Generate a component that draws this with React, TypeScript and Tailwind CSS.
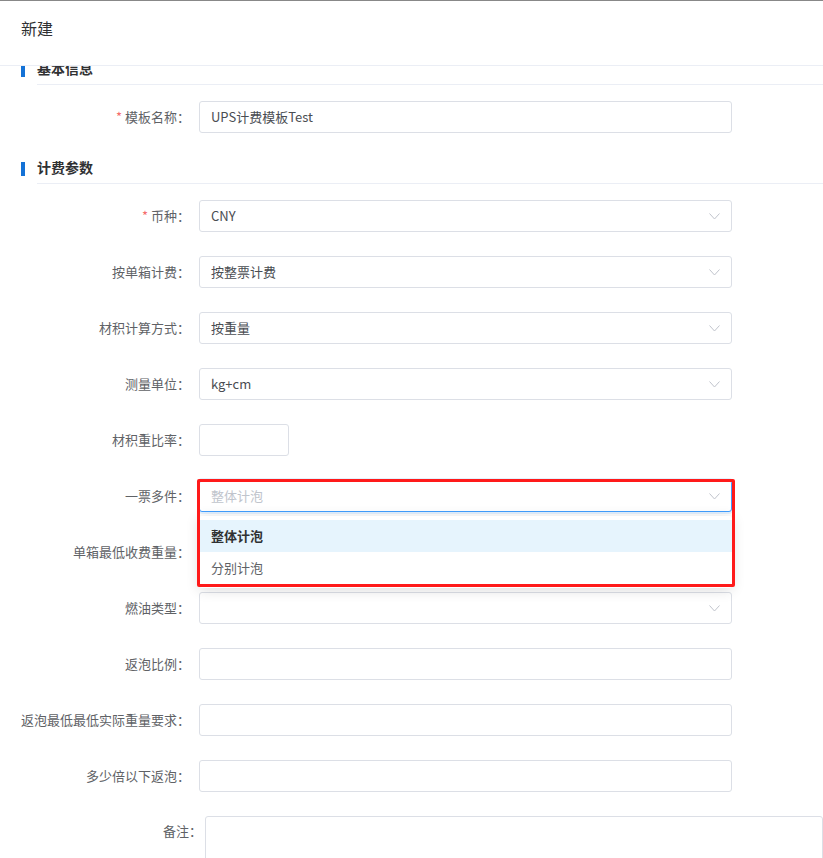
import React from 'react';

const font = { fontFamily: '"Noto Sans CJK SC", "Noto Sans", sans-serif' };

const Chevron: React.FC = () => (
  <svg width="11" height="7" viewBox="0 0 11 7" fill="none" className="shrink-0">
    <path d="M0.5 0.5L5.5 6L10.5 0.5" stroke="#c0c4cc" strokeWidth="1" />
  </svg>
);

const SectionTitle: React.FC<{ title: string }> = ({ title }) => (
  <div className="flex pl-[21px]">
    <div className="w-[4px] h-[14px] mt-[5px] bg-[#1472d6]" />
    <div className="ml-[12px] flex-1 border-b border-[#ebeef5] pt-[3px] pb-[9px] text-[14px] leading-[14px] font-bold text-[#303133]">
      {title}
    </div>
  </div>
);

type FieldProps = {
  label: string;
  required?: boolean;
  children: React.ReactNode;
};

const Field: React.FC<FieldProps> = ({ label, required, children }) => (
  <div className="flex items-center h-[32px] mb-[24px]">
    <div className="w-[190px] shrink-0 text-right text-[13px] text-[#606266] whitespace-nowrap">
      {required && <span className="text-[#f56c6c] mr-[3px]">*</span>}
      {label}：
    </div>
    <div className="ml-[9px]">{children}</div>
  </div>
);

const Input: React.FC<{ value?: string; width?: string }> = ({ value, width = 'w-[533px]' }) => (
  <div className={`${width} h-[32px] border border-[#dcdfe6] rounded-[3px] bg-white flex items-center px-[11px] text-[13px] text-[#4a4d52]`}>
    {value}
  </div>
);

const Select: React.FC<{ value?: string }> = ({ value }) => (
  <div className="w-[533px] h-[32px] border border-[#dcdfe6] rounded-[3px] bg-white flex items-center justify-between pl-[11px] pr-[11px] text-[13px] text-[#4a4d52]">
    <span>{value}</span>
    <Chevron />
  </div>
);

export default function App() {
  return (
    <div className="w-[823px] h-[858px] bg-white overflow-hidden" style={font}>
      <div className="relative z-10 h-[66px] border-t border-[#888888] border-b border-b-[#ebeef5] bg-white px-[21px] pt-[17px] text-[16px] leading-[20px] text-[#303133]">
        新建
      </div>
      <div className="h-[792px] overflow-hidden">
        <div className="-mt-[8px]">
          <SectionTitle title="基本信息" />
          <div className="pt-[16px]">
            <Field label="模板名称" required>
              <Input value="UPS计费模板Test" />
            </Field>
          </div>
          <SectionTitle title="计费参数" />
          <div className="pt-[16px]">
            <Field label="币种" required>
              <Select value="CNY" />
            </Field>
            <Field label="按单箱计费">
              <Select value="按整票计费" />
            </Field>
            <Field label="材积计算方式">
              <Select value="按重量" />
            </Field>
            <Field label="测量单位">
              <Select value="kg+cm" />
            </Field>
            <Field label="材积重比率">
              <Input width="w-[90px]" />
            </Field>
            <Field label="一票多件">
              <div className="relative">
                <div className="w-[533px] h-[32px] border border-[#409eff] rounded-[3px] bg-white flex items-center justify-between px-[11px] text-[13px] text-[#c0c4cc] shadow-[0_0_0_2px_rgba(64,158,255,0.15)]">
                  <span>整体计泡</span>
                  <Chevron />
                </div>
                <div className="absolute left-0 top-[36px] z-20 w-[533px] bg-white rounded-[3px] py-[4px] shadow-[0_2px_14px_rgba(0,0,0,0.14)]">
                  <div className="h-[32px] flex items-center px-[12px] bg-[#e6f4fd] text-[13px] font-bold text-[#303133]">
                    整体计泡
                  </div>
                  <div className="h-[32px] flex items-center px-[12px] text-[13px] text-[#606266]">
                    分别计泡
                  </div>
                </div>
                <div className="absolute -left-[2px] -top-[1px] z-30 w-[538px] h-[108px] border-[3px] border-[#ff1a1a] rounded-[2px] pointer-events-none" />
              </div>
            </Field>
            <Field label="单箱最低收费重量">
              <Input />
            </Field>
            <Field label="燃油类型">
              <Select />
            </Field>
            <Field label="返泡比例">
              <Input />
            </Field>
            <Field label="返泡最低最低实际重量要求">
              <Input />
            </Field>
            <Field label="多少倍以下返泡">
              <Input />
            </Field>
            <div className="flex items-start">
              <div className="w-[202px] shrink-0 pt-[5px] text-right text-[13px] text-[#606266]">备注：</div>
              <div className="ml-[3px] w-[640px] h-[80px] border border-[#dcdfe6] rounded-[3px]" />
            </div>
          </div>
        </div>
      </div>
    </div>
  );
}
